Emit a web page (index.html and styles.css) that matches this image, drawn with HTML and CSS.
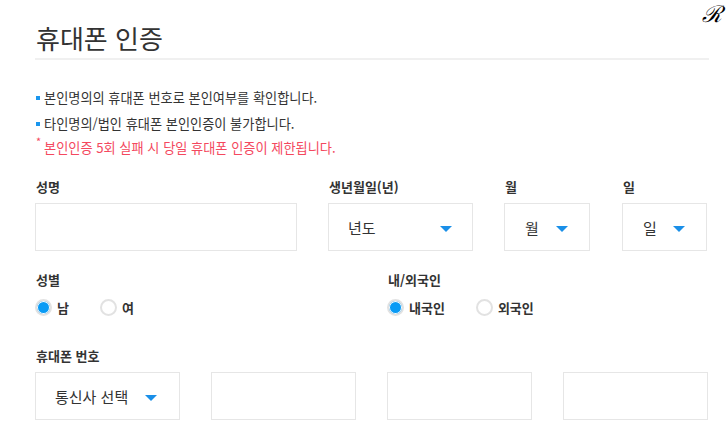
FILE: index.html
```html
<!DOCTYPE html>
<html lang="ko">
<head>
<meta charset="utf-8">
<link rel="stylesheet" href="styles.css">
</head>
<body>
<span class="mark">ℛ</span>
<div class="page">
  <h1 class="title">휴대폰 인증</h1>
  <ul class="notes">
    <li class="note">본인명의의 휴대폰 번호로 본인여부를 확인합니다.</li>
    <li class="note">타인명의/법인 휴대폰 본인인증이 불가합니다.</li>
    <li class="note warn">본인인증 5회 실패 시 당일 휴대폰 인증이 제한됩니다.</li>
  </ul>

  <div class="row-top">
    <div class="field">
      <div class="label">성명</div>
      <div class="box"></div>
    </div>
    <div class="field">
      <div class="label">생년월일(년)</div>
      <div class="box select"><span class="val">년도</span><span class="arrow"></span></div>
    </div>
    <div class="field">
      <div class="label">월</div>
      <div class="box select small"><span class="val">월</span><span class="arrow"></span></div>
    </div>
    <div class="field">
      <div class="label">일</div>
      <div class="box select small"><span class="val">일</span><span class="arrow"></span></div>
    </div>
  </div>

  <div class="row-radio">
    <div class="field">
      <div class="label">성별</div>
      <div class="radios">
        <span class="radio on">남</span>
        <span class="radio gap-sm">여</span>
      </div>
    </div>
    <div class="field">
      <div class="label">내/외국인</div>
      <div class="radios">
        <span class="radio on">내국인</span>
        <span class="radio gap-lg">외국인</span>
      </div>
    </div>
  </div>

  <div class="phone">
    <div class="label">휴대폰 번호</div>
    <div class="phone-row">
      <div class="box select"><span class="val">통신사 선택</span><span class="arrow"></span></div>
      <div class="box"></div>
      <div class="box"></div>
      <div class="box"></div>
    </div>
  </div>
</div>
</body>
</html>
```
FILE: styles.css
```css
* { box-sizing: border-box; }
html, body { margin: 0; padding: 0; background: #fff; }
body {
  font-family: "Noto Sans CJK KR", "Noto Sans", sans-serif;
  color: #333;
  width: 728px;
  height: 446px;
  overflow: hidden;
  position: relative;
}
.mark {
  position: absolute;
  right: 6px;
  top: -3px;
  font-family: "DejaVu Serif", serif;
  font-style: italic;
  font-size: 23px;
  color: #000;
}
.page {
  padding: 20px 20px 0 35px;
  width: 728px;
}
.title {
  margin: 0;
  font-size: 26px;
  font-weight: 400;
  line-height: 36px;
  color: #333;
  padding-left: 1px;
  padding-bottom: 2px;
  border-bottom: 2px solid #f0f0f0;
  width: 674px;
}
.notes {
  list-style: none;
  margin: 0;
  padding: 25px 0 0 0;
}
.note {
  position: relative;
  padding-left: 9px;
  font-size: 13.2px;
  line-height: 26px;
  color: #333;
}
.note::before {
  content: "";
  position: absolute;
  left: 1px;
  top: 11px;
  width: 4px;
  height: 4px;
  background: #1a96ee;
}
.note.warn { color: #f4485e; line-height: 22px; }
.note.warn::before {
  content: "*";
  background: none;
  width: auto;
  height: auto;
  top: -7px;
  left: 1px;
  font-size: 11px;
}
.row-top {
  display: grid;
  grid-template-columns: 262px 145px 86px 86px;
  column-gap: 31px;
  margin-top: 18px;
}
.row-top .field:nth-child(4) { margin-left: 1px; }
.label {
  font-size: 13px;
  font-weight: 700;
  line-height: 20px;
  color: #333;
  margin-bottom: 6px;
  padding-left: 1px;
}
.box {
  height: 48px;
  border: 1px solid #e6e6e6;
  background: #fff;
}
.select {
  display: flex;
  align-items: center;
  padding: 0 20px 0 19px;
  font-size: 15px;
  color: #333;
  justify-content: space-between;
}
.select.small { padding: 0 21px 0 20px; }
.arrow {
  width: 0;
  height: 0;
  border-left: 6px solid transparent;
  border-right: 6px solid transparent;
  border-top: 6px solid #1a8fe8;
  margin-top: 3px;
}
.row-radio {
  display: grid;
  grid-template-columns: 352px 1fr;
  margin-top: 19px;
}
.row-radio .label { margin-bottom: 4px; }
.radios {
  display: flex;
  align-items: center;
  height: 27px;
}
.radio {
  display: inline-flex;
  align-items: center;
  font-size: 13px;
  font-weight: 700;
  color: #333;
}
.radio::before {
  content: "";
  border: 2px solid #e2e2e2;
  border-radius: 50%;
  margin-right: 5px;
  background: #fff;
  box-sizing: content-box;
  width: 13px;
  height: 13px;
}
.radio.on::before {
  background: #0a9bf5;
  box-shadow: inset 0 0 0 1px #fff;
}
.gap-sm { margin-left: 31px; }
.gap-lg { margin-left: 31px; }
.phone { margin-top: 25px; }
.phone .label { margin-bottom: 6px; }
.phone-row {
  display: grid;
  grid-template-columns: repeat(4, 145px);
  column-gap: 31px;
}
.phone-row .select { padding: 0 22px 0 19px; }
```
